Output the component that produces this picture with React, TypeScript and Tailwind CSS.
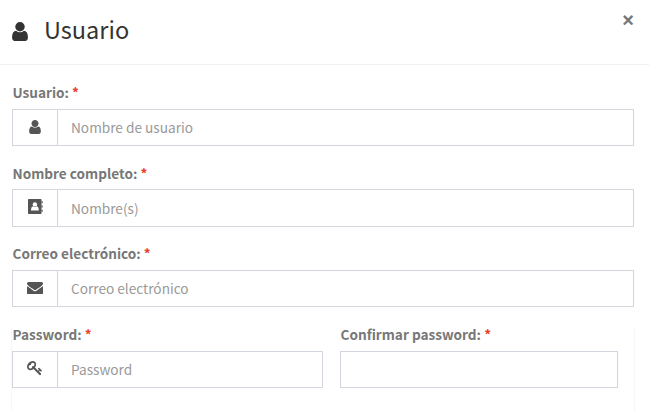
import type { ReactNode } from "react";

const glyphs = {
  user: {
    w: 1280,
    h: 1536,
    top: 1408,
    d: "M1280 137q0-109-62.5-187T1067-128H213q-88 0-150.5 78T0 137q0 85 8.5 160.5t31.5 152 58.5 131 94 89T327 704q131-128 313-128t313 128q76 0 134.5-34.5t94-89 58.5-131 31.5-152 8.5-160.5zM1024 1024q0-159-112.5-271.5T640 640 368.5 752.5 256 1024t112.5 271.5T640 1408t271.5-112.5T1024 1024z",
  },
  envelope: {
    w: 1792,
    h: 1408,
    top: 1280,
    d: "M1792 826V32q0-66-47-113t-113-47H160Q94-128 47-81T0 32v794q44-49 101-87 362-246 497-345 57-42 92.5-65.5t94.5-48T895 256h2q51 0 110.5 24.5t94.5 48 92.5 65.5q170 123 498 345 57 39 100 87zM1792 1120q0-79-49-151t-122-123q-376-261-468-325-10-7-42.5-31T1056.500 451t-52.500-32.500-57.500-27T897 382h-2q-23 0-49.500 9.500t-57.500 27T735.500 451t-54 38.800T639 520Q548 584 377 702.500T172 845q-62 42-117 115.500T0 1097q0 78 41.500 130T160 1279h1472q65 0 112.500-47t47.500-113z",
  },
  key: {
    w: 1683,
    h: 1592,
    top: 1408,
    d: "M832 1024q0 80-56 136t-136 56-136-56-56-136q0-42 19-83-41 19-83 19-80 0-136-56t-56-136 56-136 136-56 136 56 56 136q0 42-19 83 41-19 83-19 80 0 136 56t56 136zM1683 320q0-17-49-66t-66-49q-9 0-28.500 16t-36.500 33-38.500 40-24.500 26l-96-96L1564 4q28-28 28-68 0-42-39-81t-81-39q-40 0-68 28L733 515Q557 384 368 384q-163 0-265.500 102.500T0 752q0 160 95 313t248 248 313 95q163 0 265.500-102.500T1024 1040q0-189-131-365l355-355 96 96q-3 3-26 24.500t-40 38.500-33 36.500-16 28.500q0 17 49 66t66 49q13 0 23-10 6-6 46-44.500t82-79.500 86.500-86 73-78 28.500-41z",
  },
};

function Glyph({ name, className }: { name: keyof typeof glyphs; className: string }) {
  const g = glyphs[name];
  return (
    <svg viewBox={`0 0 ${g.w} ${g.h}`} className={className} fill="currentColor" aria-hidden>
      <path transform={`translate(0 ${g.top}) scale(1 -1)`} fillRule="evenodd" d={g.d} />
    </svg>
  );
}

function AddressBook() {
  return (
    <svg viewBox="0 0 15 15" className="mb-px h-[15px] w-[15px]" aria-hidden>
      <rect width="13.500" height="15" rx="0.800" fill="currentColor" />
      <path d="M13.500 2.200h1.200v2h-1.200zM13.500 6.500h1.200v2h-1.200zM13.500 10.800h1.200v2h-1.200z" fill="currentColor" />
      <circle cx="6.900" cy="5.400" r="2.200" fill="#fff" />
      <path d="M3 11.500c0-2.400.6-4.100 2-4.300 1.100 1 2.700 1 3.800 0 1.400.2 2 1.900 2 4.300z" fill="#fff" />
    </svg>
  );
}

function Label({ children }: { children: ReactNode }) {
  return (
    <label className="block h-5 pl-[0.5px] text-[13.6px] leading-5 font-bold whitespace-nowrap text-[#777]">
      {children} <span className="text-[#e8402c]">*</span>
    </label>
  );
}

function Field({ icon, placeholder, className }: { icon: ReactNode; placeholder: string; className: string }) {
  return (
    <div className={`flex border border-[#d2d6de] ${className}`}>
      <span className="flex w-[45px] shrink-0 items-center justify-center border-r border-[#d2d6de] pb-0.5 text-[#555]">
        {icon}
      </span>
      <input
        placeholder={placeholder}
        className="min-w-0 flex-1 px-[13px] text-[13.65px] outline-none placeholder:text-[#999]"
      />
    </div>
  );
}

export default function App() {
  return (
    <div className="h-[413px] w-[649px] overflow-hidden bg-white font-['Noto_Sans_CJK_SC',sans-serif]">
      <header className="flex h-[65px] items-start justify-between border-b border-[#f0f0f0] pr-[15px] pl-3 text-[#333]">
        <h1 className="flex h-[60px] items-center text-[23.5px]">
          <Glyph name="user" className="mt-[3px] h-[19px] w-4" />
          <span className="ml-4">Usuario</span>
        </h1>
        <button className="mt-2.5 font-['Liberation_Sans',sans-serif] text-[20px] leading-5 font-bold text-[#777]">×</button>
      </header>

      <form className="pr-[15px] pl-3">
        <div className="pt-[17px]">
          <Label>Usuario:</Label>
          <Field className="mt-[7px] h-[37px]" icon={<Glyph name="user" className="h-[14px] w-3" />} placeholder="Nombre de usuario" />
        </div>
        <div className="pt-[17px]">
          <Label>Nombre completo:</Label>
          <Field className="mt-1.5 h-[38px]" icon={<AddressBook />} placeholder="Nombre(s)" />
        </div>
        <div className="pt-4">
          <Label>Correo electrónico:</Label>
          <Field className="mt-[7px] h-[37px]" icon={<Glyph name="envelope" className="mt-px h-[12.600px] w-4" />} placeholder="Correo electrónico" />
        </div>
        <div className="mt-5 -mr-px -ml-px flex h-[85px] border-x border-[#f7f7f7]">
          <div className="w-[311px]">
            <div className="-mt-[3px]">
              <Label>Password:</Label>
            </div>
            <Field className="mt-[7px] h-[37px]" icon={<Glyph name="key" className="mr-px h-[14.200px] w-[15px]" />} placeholder="Password" />
          </div>
          <div className="ml-[17px] w-[278px]">
            <div className="-mt-[3px]">
              <Label>Confirmar password:</Label>
            </div>
            <input className="mt-[7px] h-[37px] w-full border border-[#d2d6de] px-3 outline-none" />
          </div>
        </div>
      </form>
    </div>
  );
}
